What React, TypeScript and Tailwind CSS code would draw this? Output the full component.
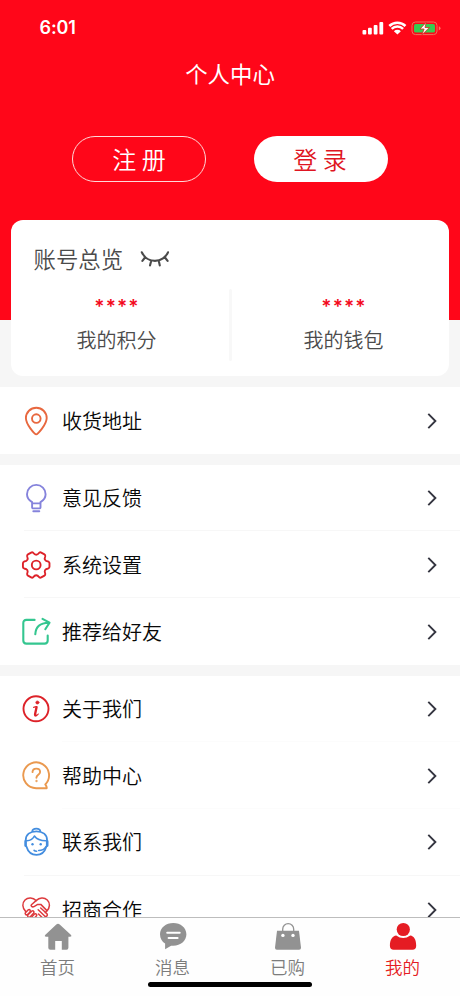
import type { ReactNode } from 'react';

const gearPath = (() => {
  const point = (deg: number, r: number) => {
    const a = (deg * Math.PI) / 180;
    return `${(15.2 + r * Math.cos(a)).toFixed(2)} ${(15 + r * Math.sin(a)).toFixed(2)}`;
  };
  let d = '';
  for (let k = 0; k < 6; k++) {
    const a = k * 60;
    d += `${k === 0 ? 'M' : 'L'}${point(a - 16, 12.6)}Q${point(a - 13, 13.6)} ${point(a - 8, 13.4)}L${point(a + 8, 13.4)}Q${point(a + 13, 13.6)} ${point(a + 16, 12.6)}Q${point(a + 30, 8.2)} ${point(a + 44, 12.6)}`;
  }
  return d + 'Z';
})();

function Icon({ color, children }: { color: string; children: ReactNode }) {
  return (
    <svg className="size-[30px] shrink-0" viewBox="0 0 30 30" fill="none" stroke={color} strokeWidth="1.9" strokeLinecap="round" strokeLinejoin="round">
      {children}
    </svg>
  );
}

const pin = (
  <Icon color="#e8683f">
    <path d="M15.2 28.4C13.8 28.4 4.9 18.6 4.9 12.1a10.4 10.4 0 0 1 20.8 0C25.7 18.6 16.6 28.4 15.2 28.4Z" />
    <circle cx="15.3" cy="12.6" r="4.3" />
  </Icon>
);
const bulb = (
  <Icon color="#8583dc">
    <path d="M11.1 20.4v-1.3C8.2 17.4 6 14.8 6 11.2a9.3 9.3 0 0 1 18.6 0c0 3.6-2.2 6.2-5.1 7.9v1.3ZM11.1 20.4v4.2q0 .8.8.8h6.8q.8 0 .8-.8v-4.2M12.3 28.2h6" />
  </Icon>
);
const gear = (
  <Icon color="#dd2229">
    <path d={gearPath} />
    <circle cx="15.2" cy="15" r="4.4" />
  </Icon>
);
const share = (
  <Icon color="#34c690">
    <path strokeWidth="2.1" d="M13.6 2.9H5.4Q2.3 2.9 2.3 6V23.5q0 3.1 3.1 3.1h18.2q3.1 0 3.1-3.1v-5M14.3 17.3C14.6 10 19 5.9 27.6 5.7M21.5 1.9l7 3.8-4.2 6.5" />
  </Icon>
);
const info = (
  <Icon color="#dd2229">
    <circle cx="15" cy="14.8" r="12.5" />
    <circle cx="16.4" cy="8.5" r="1.6" fill="#dd2229" strokeWidth=".6" />
    <path strokeWidth="1.2" d="M12.6 13.3q1.6-.2 3-.6" />
    <path strokeWidth="2.3" d="M15.6 13.1 14.1 20q-.3 1.7.8 1.4" />
    <path strokeWidth="1.1" d="M14.6 21.7q1.6 0 2.7-1.7" />
  </Icon>
);
const help = (
  <Icon color="#ea994f">
    <path d="M24.3 23.4A12.9 12.9 0 1 0 15.2 27.2H25.7C26 26.3 25.3 24.9 24.3 23.4Z" />
    <path d="M11.5 11.1c.1-2.2 1.6-3.5 3.8-3.5s3.8 1.4 3.8 3.3c0 2.8-3.7 2.9-3.7 5.9" />
    <circle cx="15.4" cy="20" r=".8" fill="#ea994f" strokeWidth=".6" />
  </Icon>
);
const operator = (
  <Icon color="#438ddf">
    <path strokeWidth="1.8" d="M11.2 4.5C11.4 2.7 13 1.7 15.3 1.7s3.9 1 4.1 2.8M4.7 13.4C4.6 7.4 9 4.3 15.4 4.3s10.8 3.1 10.7 9.1M5.3 19.2C7 24.8 10.8 27.9 15.5 27.9s8.3-3.1 10-8.7" />
    <path strokeWidth="1.6" d="M5.8 13.8c4-.3 6.4-2.2 7.6-4.8 2.4 3.4 6.2 4.7 11.5 4.8M24.8 19.8q-2.2 3.7-7.1 3.7M15.6 24.2q-1.7 0-2.5-.8" />
    <path strokeWidth="2.6" d="M4.6 14.4v4.2M26.2 14.4v4.2" />
    <circle cx="11.5" cy="17.2" r="1.2" fill="#438ddf" stroke="none" />
    <circle cx="19.7" cy="17.2" r="1.2" fill="#438ddf" stroke="none" />
  </Icon>
);
const handshake = (
  <Icon color="#dd3a3d">
    <g strokeWidth="1.5">
      <path d="M4.6 16.4C1.2 13 .9 8 4 5c3-3 8-2.7 11.1.6C18.5 2.3 23.2 2 26.3 5c3.1 3.1 2.7 7.6-.4 11" />
      <path d="M15.1 5.6 10.4 9.7c-.9 1.1.7 2.8 2.6 1.9l3.7-2.2h3.1l6.1 6.2-1.6 2" />
      <path d="M4.4 17.7 7.1 14.9q1.3-.8 2 .3.6 1.1-.3 2L6.7 19.4q-1.3.9-2.1 0-.8-.8-.2-1.7Z" />
      <path d="m7 19.8 3.7-3.7q1.3-.7 2 .3.5 1-.2 1.9l-3.4 3.6q-1.3.8-2.1-.1-.7-.9 0-2Z" />
      <path d="m10.2 22.5 3.3-3.5q1.3-.6 2 .4.5 1-.3 1.8L12.3 24.3q-1.3.7-2-.2-.6-.8-.1-1.6Z" />
      <path d="M13.8 25.5l2.5-2.6q1.3-.5 1.7.5.3 1-.5 1.8l-1.6 1.6M17.2 14.8l6.7 6.4q.8 1.4-.4 2-1.1.5-2-.4l-4-3.8M21.5 22.8q.7 1.5-.5 2.1-1 .4-1.9-.4M24.6 21.5q1.9-.3 1.7-1.7 0-.7-.6-1.3l-6-5.500" />
    </g>
  </Icon>
);

function Row({ icon, label, line = 'none' }: { icon: ReactNode; label: string; line?: 'none' | 'full' | 'faint' }) {
  return (
    <div className="flex h-[66.7px] shrink-0 flex-col bg-white">
      <div className="flex min-h-0 flex-1 items-center pt-px pr-5 pl-[21px]">
        {icon}
        <span className="ml-[11px] flex-1 text-[20px] leading-[30px] font-[350] text-[#080808]">{label}</span>
        <svg className="h-[18px] w-[14px]" viewBox="0 0 14 18" fill="none" stroke="#343540" strokeWidth="1.9">
          <path d="M2.3 1.8 9.4 9l-7.1 7.2" />
        </svg>
      </div>
      {line === 'full' && <div className="ml-6 h-px bg-[#f7f7f7]" />}
      {line === 'faint' && <div className="ml-[62px] h-px bg-[#fcfcfc]" />}
    </div>
  );
}

function Amount({ label }: { label: string }) {
  return (
    <div className="flex flex-col items-center">
      <div className="mt-[2px] h-[36px] pl-[1px] font-['Inter'] text-[19px] leading-[36px] font-semibold tracking-[1.1px] text-[#f3091c]">****</div>
      <div className="text-[20px] leading-[30px] font-[350] text-[#4b4b4b]">{label}</div>
    </div>
  );
}

function Tab({ label, active = false, children }: { label: string; active?: boolean; children: ReactNode }) {
  return (
    <div className={active ? 'flex flex-1 flex-col items-center pt-1 text-[#e51c23]' : 'flex flex-1 flex-col items-center pt-1 text-[#7c7c7c]'}>
      <svg className="size-[30px]" viewBox="0 0 30 30" fill={active ? '#e51c23' : '#929292'}>
        {children}
      </svg>
      <span className="mt-[2px] text-[17.5px] leading-[26px] font-[350]">{label}</span>
    </div>
  );
}

export default function App() {
  return (
    <div className="relative flex h-[996px] w-[460px] flex-col overflow-hidden bg-[#f6f6f6] font-['Noto_Sans_CJK_SC',sans-serif]">
      <header className="h-80 shrink-0 bg-[#ff0619] text-white">
        <div className="flex h-[55px] items-center justify-between pr-[18px] pl-[39.5px]">
          <span className="font-['Inter'] text-[18px] leading-[27px] font-semibold tracking-[-0.1px]">6:01</span>
          <svg className="h-[18px] w-[80px]" viewBox="0 0 80 18" fill="white">
            <rect x="0.5" y="11" width="3.8" height="4.5" rx="1" />
            <rect x="6" y="8.8" width="3.8" height="6.7" rx="1" />
            <rect x="11.7" y="6" width="3.8" height="9.5" rx="1" />
            <rect x="17.4" y="3" width="3.8" height="12.5" rx="1" />
            <path d="M35.4 15.6 31.9 12.2a5 5 0 0 1 7 0Z" />
            <g fill="none" stroke="white" strokeWidth="2.5">
              <path d="M29.7 9.8a8.2 8.2 0 0 1 11.4 0M27.3 7a11.6 11.6 0 0 1 16.2 0" />
            </g>
            <rect x="50" y="3" width="25" height="12.6" rx="3.5" fill="none" stroke="#ec715c" />
            <rect x="52" y="5" width="21" height="8.6" rx="1.7" fill="#37cb50" />
            <path d="M76.8 7.2v4.2q1.7-.5 1.7-2.1t-1.7-2.1" fill="#ff7460" />
            <path d="M64.3 3.2 58 10h4.1l-2.2 5.9 7.5-7.4H63Z" stroke="#d42920" strokeWidth=".8" />
          </svg>
        </div>
        <h1 className="mt-px text-center text-[22.4px] leading-[34px] font-normal">个人中心</h1>
        <div className="mt-[46px] flex gap-12 pl-[72px]">
          <button className="h-[46px] w-[134px] rounded-full border-[1.3px] border-[#ffd9d9] text-[24px] leading-[42px] font-[350]">注 册</button>
          <button className="h-[46px] w-[134px] rounded-full bg-white pr-[2px] text-[24px] leading-[44px] font-[350] text-[#df1522]">登 录</button>
        </div>
      </header>

      <section className="z-10 mx-[11px] -mt-[100px] h-[156px] shrink-0 rounded-[12px] bg-white pt-[22px]">
        <div className="flex h-[34px] items-center pl-[22.5px] text-[22.4px] font-[350] text-[#4b4b4b]">
          账号总览
          <svg className="ml-[17px] h-[20px] w-[30px]" viewBox="0 0 30 20" fill="none" stroke="#4b4b4b" strokeWidth="2.1" strokeLinecap="round">
            <path d="M1.8 3.3C4 7.9 9 11.9 15 11.9S26 7.9 28 3.3M5 8.5l-2.6 3.4M11.3 11.6 10 16.4M18.7 11.6 19.8 16.4M25 8.5l2.6 3.4" />
          </svg>
        </div>
        <div className="flex pt-[11px]">
          <div className="w-[211px]"><Amount label="我的积分" /></div>
          <div className="flex w-4 justify-center"><div className="mt-[2px] h-[72px] w-[3px] rounded bg-[#f8f8f8]" /></div>
          <div className="flex-1"><Amount label="我的钱包" /></div>
        </div>
      </section>

      <main className="mt-[11px] flex min-h-0 flex-1 flex-col gap-[11px] overflow-hidden">
        <section className="shrink-0"><Row icon={pin} label="收货地址" /></section>
        <section className="shrink-0">
          <Row icon={bulb} label="意见反馈" line="full" />
          <Row icon={gear} label="系统设置" line="full" />
          <Row icon={share} label="推荐给好友" />
        </section>
        <section className="shrink-0">
          <Row icon={info} label="关于我们" line="faint" />
          <Row icon={help} label="帮助中心" line="faint" />
          <Row icon={operator} label="联系我们" line="full" />
          <Row icon={handshake} label="招商合作" />
        </section>
      </main>

      <nav className="flex h-[79px] shrink-0 border-t border-[#bdbdbd] bg-[#fefefe]">
        <Tab label="首页">
          <path d="M13.3 2.4q1.7-1.5 3.4 0L27.8 12.8q1.5 1.9-.8 1.9h-1.6V25.8q0 1.9-1.9 1.9h-4.700v-8.800h-6.600v8.800H7.400q-2.100 0-2.100-1.900V14.700H3.200q-2.300 0-.8-1.900Z" />
        </Tab>
        <Tab label="消息">
          <path d="M15.3 1C8 1 2 5.7 2 12.3c0 4.4 2.1 7.4 5.1 9.3v5.7l6-3.6c.8.1 1.5.1 2.2.1 7.3 0 13.1-5 13.1-11.5S22.6 1 15.3 1Z" />
          <path d="M9.2 10.8h12.500M10.600 15.900h9" stroke="white" strokeWidth="2" strokeLinecap="round" />
        </Tab>
        <Tab label="已购">
          <path d="M4 8.8h22l2 17q.1 2-1.9 2H3.9q-2 0-1.9-2Z" />
          <path d="M9.7 9V7.2a5.5 5.5 0 0 1 11 0V9" fill="none" stroke="#929292" strokeWidth="1.3" />
          <circle cx="9.9" cy="13.4" r="1.700" fill="white" />
          <circle cx="20" cy="13.4" r="1.700" fill="white" />
        </Tab>
        <Tab label="我的" active>
          <circle cx="15.3" cy="7.5" r="6.6" />
          <path d="M8.2 13.6q7 5 14.1 0c3.6.4 5.9 4 5.9 10.2 0 2.4-1.4 4-3.7 4H5.6c-2.3 0-3.7-1.6-3.7-4 0-6.2 2.7-9.8 6.3-10.2Z" />
        </Tab>
      </nav>
      <div className="absolute bottom-[9px] left-[148px] h-[5.5px] w-[164px] rounded-full bg-black" />
    </div>
  );
}
